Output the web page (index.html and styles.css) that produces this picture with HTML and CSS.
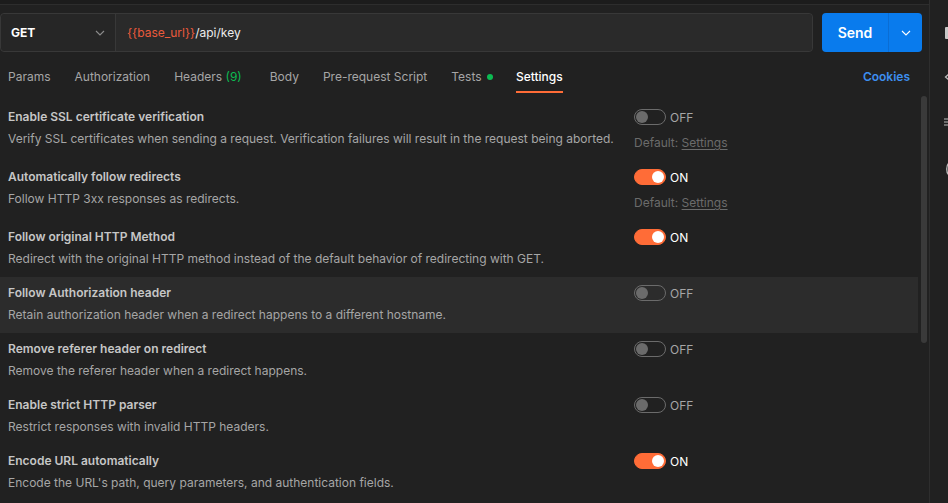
FILE: index.html
```html
<!DOCTYPE html>
<html>
<head>
<meta charset="utf-8">
<link rel="stylesheet" href="styles.css">
</head>
<body>
<div class="app">
  <div class="main">
    <div class="topstrip"></div>
    <div class="reqbar">
      <div class="urlbox">
        <div class="method"><span>GET</span>
          <svg class="chev" width="10" height="6" viewBox="0 0 10 6"><path d="M1 1l4 4 4-4" fill="none" stroke="#8c8c8c" stroke-width="1.1"/></svg>
        </div>
        <div class="url"><span class="var">{{base_url}}</span>/api/key</div>
      </div>
      <div class="send">
        <div class="send-main">Send</div>
        <div class="send-drop"><svg width="10" height="6" viewBox="0 0 10 6"><path d="M1 1l4 4 4-4" fill="none" stroke="#fff" stroke-width="1.1"/></svg></div>
      </div>
    </div>
    <div class="tabs">
      <div class="tab">Params</div>
      <div class="tab">Authorization</div>
      <div class="tab">Headers <span class="green">(9)</span></div>
      <div class="tab tab-body">Body</div>
      <div class="tab">Pre-request Script</div>
      <div class="tab">Tests <span class="dot"></span></div>
      <div class="tab active">Settings</div>
      <div class="spacer"></div>
      <div class="cookies">Cookies</div>
    </div>
    <div class="content">
      <div class="list">
        <div class="row">
          <div class="info"><div class="title">Enable SSL certificate verification</div><div class="desc">Verify SSL certificates when sending a request. Verification failures will result in the request being aborted.</div></div>
          <div class="ctrl"><div class="sw"><span class="toggle"></span><span class="lbl">OFF</span></div><div class="def">Default: <u>Settings</u></div></div>
        </div>
        <div class="row">
          <div class="info"><div class="title">Automatically follow redirects</div><div class="desc">Follow HTTP 3xx responses as redirects.</div></div>
          <div class="ctrl"><div class="sw"><span class="toggle on"></span><span class="lbl on">ON</span></div><div class="def">Default: <u>Settings</u></div></div>
        </div>
        <div class="row">
          <div class="info"><div class="title">Follow original HTTP Method</div><div class="desc">Redirect with the original HTTP method instead of the default behavior of redirecting with GET.</div></div>
          <div class="ctrl"><div class="sw"><span class="toggle on"></span><span class="lbl on">ON</span></div></div>
        </div>
        <div class="row hl">
          <div class="info"><div class="title">Follow Authorization header</div><div class="desc">Retain authorization header when a redirect happens to a different hostname.</div></div>
          <div class="ctrl"><div class="sw"><span class="toggle"></span><span class="lbl">OFF</span></div></div>
        </div>
        <div class="row">
          <div class="info"><div class="title">Remove referer header on redirect</div><div class="desc">Remove the referer header when a redirect happens.</div></div>
          <div class="ctrl"><div class="sw"><span class="toggle"></span><span class="lbl">OFF</span></div></div>
        </div>
        <div class="row">
          <div class="info"><div class="title">Enable strict HTTP parser</div><div class="desc">Restrict responses with invalid HTTP headers.</div></div>
          <div class="ctrl"><div class="sw"><span class="toggle"></span><span class="lbl">OFF</span></div></div>
        </div>
        <div class="row">
          <div class="info"><div class="title">Encode URL automatically</div><div class="desc">Encode the URL's path, query parameters, and authentication fields.</div></div>
          <div class="ctrl"><div class="sw"><span class="toggle on"></span><span class="lbl on">ON</span></div></div>
        </div>
      </div>
      <div class="scroll"><div class="thumb"></div></div>
    </div>
  </div>
  <div class="side">
    <svg class="ic ic1" width="8" height="12" viewBox="0 0 8 12"><rect x="0" y="0" width="8" height="12" rx="1" fill="#c8c8c8"/></svg>
    <svg class="ic ic2" width="8" height="10" viewBox="0 0 8 10"><path d="M5 2L1.5 5 5 8" fill="none" stroke="#bdbdbd" stroke-width="1.3"/><circle cx="7" cy="5" r="1" fill="#bdbdbd"/></svg>
    <svg class="ic ic3" width="8" height="10" viewBox="0 0 8 10"><path d="M0 2h8M0 5h8M0 8h8" stroke="#bdbdbd" stroke-width="1"/></svg>
    <svg class="ic ic4" width="8" height="14" viewBox="0 0 8 14"><path d="M5 1C2 3 2 11 5 13" fill="none" stroke="#bdbdbd" stroke-width="1.4"/></svg>
  </div>
</div>
</body>
</html>
```
FILE: styles.css
```css
* { box-sizing: border-box; }
html, body { margin: 0; padding: 0; }
body {
  background: #212121;
  font-family: Inter, "Noto Sans", sans-serif;
  font-size: 12px;
  color: #a6a6a6;
  width: 948px;
  height: 503px;
  overflow: hidden;
}
.app { display: flex; height: 503px; }
.main { width: 930px; border-right: 1px solid #2e2e2e; flex: none; }
.topstrip { height: 5px; background: #1c1c1c; border-bottom: 1px solid #2d2d2d; }
.reqbar { display: flex; margin-top: 8px; height: 39px; padding-right: 7px; }
.urlbox {
  width: 813px; flex: none; display: flex; background: #282828;
  border: 1px solid #383838; border-radius: 4px;
}
.method {
  width: 115px; display: flex; align-items: center; justify-content: space-between;
  padding: 0 10px 0 10px; border-right: 1px solid #383838; background: #262626;
  border-radius: 4px 0 0 4px;
  color: #fff; font-weight: 700; font-size: 12px;
}
.url { flex: 1; display: flex; align-items: center; padding-left: 11px; color: #ededed; font-size: 12px; background: #2a2a2a; border-radius: 0 4px 4px 0; }
.var { color: #ea5a3c; }
.send { display: flex; flex: none; margin-left: 9px; width: 100px; background: #097bed; border-radius: 4px; color: #fff; }
.send-main { width: 67px; display: flex; align-items: center; justify-content: center; font-weight: 600; font-size: 14px; border-right: 1px solid #0a6dd4; }
.send-drop { flex: 1; display: flex; align-items: center; justify-content: center; }
.tabs { display: flex; align-items: flex-start; margin-top: 9px; padding: 0 19px 0 8px; height: 32px; }
.tab { padding: 8px 0 6px; line-height: 16px; margin-right: 24px; border-bottom: 2px solid transparent; color: #a6a6a6; white-space: nowrap; }
.tab-body { margin-left: 4px; }
.tab.active { color: #fff; border-bottom-color: #ff6c37; font-weight: 500; margin-left: -1px; }
.green { color: #0cbb52; }
.dot { display: inline-block; width: 6px; height: 6px; border-radius: 50%; background: #0cbb52; margin-left: 2px; vertical-align: 1px; }
.spacer { flex: 1; }
.cookies { padding-top: 8px; line-height: 16px; color: #3d8ff0; font-weight: 600; }
.content { display: flex; }
.list { width: 918px; padding-top: 8px; }
.row { display: grid; grid-template-columns: 618px 1fr; column-gap: 8px; padding: 8px 0 10px 8px; }
.row.hl { background: #2c2c2c; }
.title { line-height: 16px; color: #c6c6c6; font-weight: 600; }
.desc { line-height: 16px; margin-top: 6px; color: #a6a6a6; }
.sw { display: flex; align-items: center; height: 16px; }
.toggle {
  width: 32px; height: 16px; border-radius: 8px; border: 1px solid #6b6b6b;
  display: flex; align-items: center; padding: 0 1px;
}
.toggle::after { content: ""; width: 12px; height: 12px; border-radius: 50%; background: #6b6b6b; }
.toggle.on { background: #ff6c37; border-color: #ff6c37; justify-content: flex-end; }
.toggle.on::after { background: #fff; }
.lbl { margin-left: 4px; color: #a6a6a6; }
.lbl.on { color: #fff; }
.def { margin-top: 10px; line-height: 16px; color: #6b6b6b; }
.def u { text-underline-offset: 2px; }
.scroll { width: 11px; padding: 3px 2px 0 3px; }
.thumb { width: 6px; height: 247px; background: #3a3a3a; border-radius: 3px; }
.side { flex: 1; overflow: hidden; display: flex; flex-direction: column; }
.ic { display: block; flex: none; margin-left: 14px; }
.ic1 { margin-top: 27px; margin-left: 15px; }
.ic2 { margin-top: 33px; }
.ic3 { margin-top: 35px; }
.ic4 { margin-top: 35px; }
```
